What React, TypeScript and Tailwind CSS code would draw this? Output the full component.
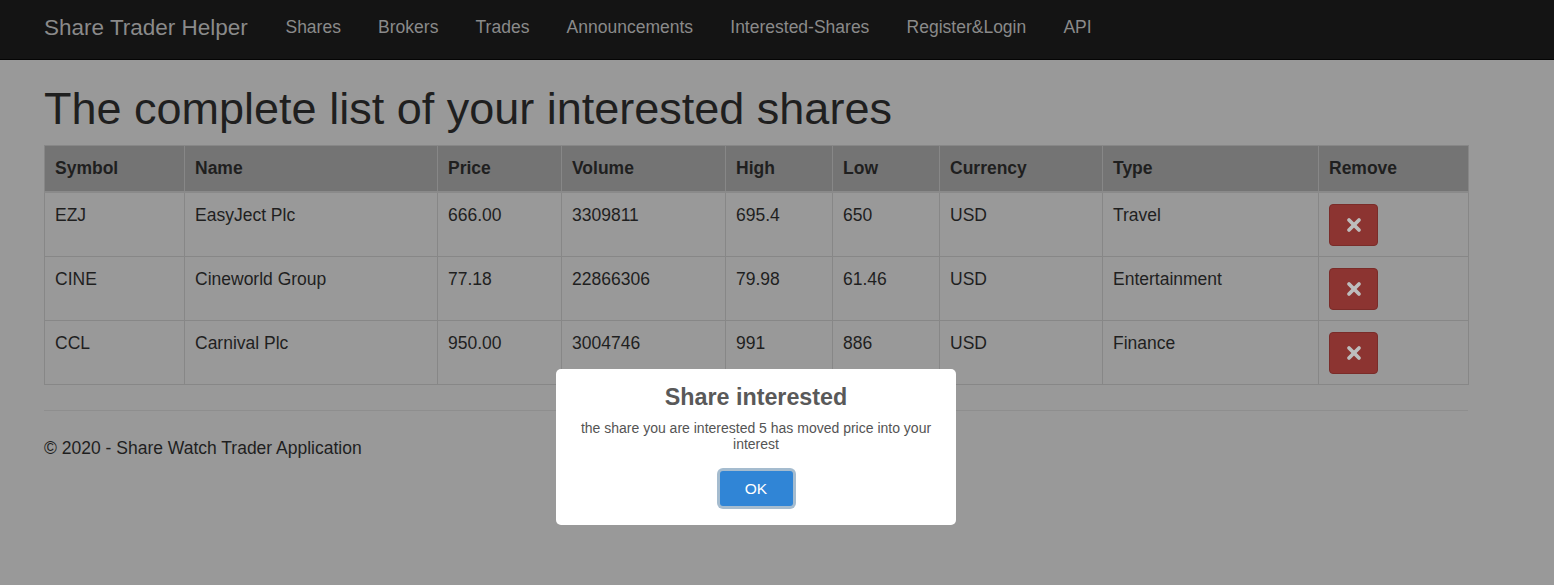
import { X } from "lucide-react";

const shares = [
  { symbol: "EZJ", name: "EasyJect Plc", price: "666.00", volume: "3309811", high: "695.4", low: "650", currency: "USD", type: "Travel" },
  { symbol: "CINE", name: "Cineworld Group", price: "77.18", volume: "22866306", high: "79.98", low: "61.46", currency: "USD", type: "Entertainment" },
  { symbol: "CCL", name: "Carnival Plc", price: "950.00", volume: "3004746", high: "991", low: "886", currency: "USD", type: "Finance" },
];

const navLinks = ["Shares", "Brokers", "Trades", "Announcements", "Interested-Shares", "Register&Login", "API"];

const columns = [
  { label: "Symbol", width: "w-[140px]" },
  { label: "Name", width: "w-[253px]" },
  { label: "Price", width: "w-[124px]" },
  { label: "Volume", width: "w-[164px]" },
  { label: "High", width: "w-[107px]" },
  { label: "Low", width: "w-[107px]" },
  { label: "Currency", width: "w-[163px]" },
  { label: "Type", width: "w-[216px]" },
  { label: "Remove", width: "w-[150px]" },
];

function NavBar() {
  return (
    <nav className="h-[60px] bg-[#141414] border-b border-[#050505] flex items-center px-[44px] pb-[4px]">
      <span className="text-[22.5px] text-[#8a8a8a] mr-[19px]">Share Trader Helper</span>
      {navLinks.map((link) => (
        <span key={link} className="text-[17.5px] text-[#8a8a8a] px-[18.6px]">
          {link}
        </span>
      ))}
    </nav>
  );
}

function AlertModal() {
  return (
    <div className="absolute left-[556px] top-[369px] w-[400px] h-[156px] bg-white rounded-[5px] flex flex-col items-center pt-[14px]">
      <h2 className="text-[23.3px] font-bold text-[#595959] leading-[28px]">Share interested</h2>
      <p className="text-[14px] text-[#545454] text-center leading-[16px] mt-[9px] px-[20px]">
        the share you are interested 5 has moved price into your interest
      </p>
      <button className="mt-[19px] w-[73px] h-[35px] bg-[#3085d6] text-white text-[15.5px] rounded-[3px] ring-[3px] ring-[#a5bccf]">
        OK
      </button>
    </div>
  );
}

export default function App() {
  return (
    <div className="relative min-h-[585px] bg-[#999999] font-['Liberation_Sans',Arial,sans-serif] text-[#1f1f1f]">
      <NavBar />
      <main className="px-[44px]">
        <h1 className="text-[45px] leading-[50px] mt-[24px] mb-[11px] text-[#1f1f1f]">
          The complete list of your interested shares
        </h1>
        <table className="w-[1424px] table-fixed border-collapse text-[17.5px]">
          <thead>
            <tr className="bg-[#747474]">
              {columns.map((col) => (
                <th
                  key={col.label}
                  className={`${col.width} h-[46px] px-[10px] text-left font-bold border border-[#878787] border-b-[2px] border-b-[#8a8a8a]`}
                >
                  {col.label}
                </th>
              ))}
            </tr>
          </thead>
          <tbody>
            {shares.map((s) => (
              <tr key={s.symbol}>
                {[s.symbol, s.name, s.price, s.volume, s.high, s.low, s.currency, s.type].map((v, i) => (
                  <td key={i} className="px-[10px] pt-[9px] align-top border border-[#878787]">
                    {v}
                  </td>
                ))}
                <td className="px-[10px] pt-[11px] pb-[10px] align-top border border-[#878787]">
                  <div className="w-[49px] h-[42px] bg-[#8c3431] border border-[#7a2c29] rounded-[4px] flex items-center justify-center">
                    <X className="w-[20px] h-[20px] text-[#bdbdbd]" strokeWidth={4.5} />
                  </div>
                </td>
              </tr>
            ))}
          </tbody>
        </table>
        <hr className="mt-[25px] border-t border-[#8e8e8e] w-[1424px]" />
        <footer className="mt-[24px] text-[17.5px]">© 2020 - Share Watch Trader Application</footer>
      </main>
      <AlertModal />
    </div>
  );
}
